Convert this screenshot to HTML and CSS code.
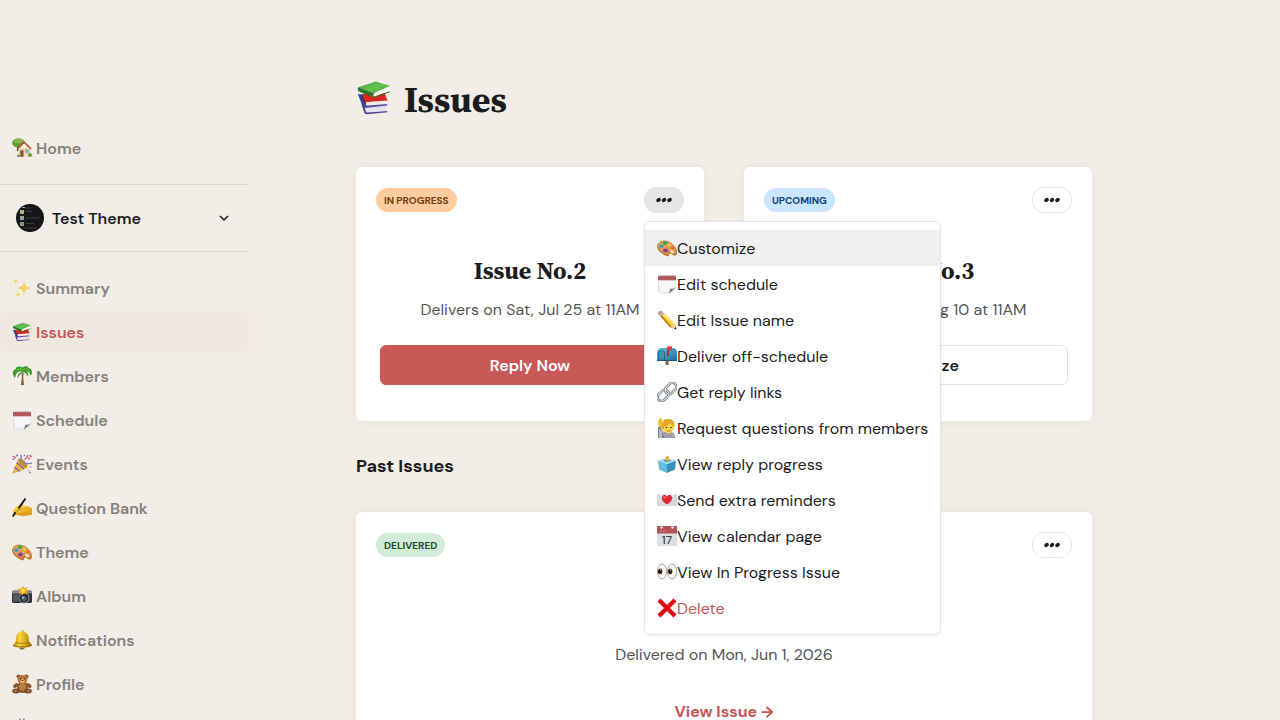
FILE: index.html
```html
<!DOCTYPE html>
<html lang="en">
<head>
<meta charset="utf-8">
<meta name="viewport" content="width=device-width, initial-scale=1">
<title>Issues</title>
<link rel="stylesheet" href="styles.css">
</head>
<body>
<svg class="sprite" aria-hidden="true">
  <defs>
    <linearGradient id="gold" x1="0" y1="0" x2="1" y2="1"><stop offset="0" stop-color="#ffe04f"/><stop offset="1" stop-color="#d99012"/></linearGradient>
    <linearGradient id="blue" x1="0" y1="0" x2="1" y2="1"><stop offset="0" stop-color="#63bfe2"/><stop offset="1" stop-color="#1c6f9d"/></linearGradient>
    <linearGradient id="leaf" x1="0" y1="0" x2="1" y2="1"><stop offset="0" stop-color="#3f9c3c"/><stop offset=".5" stop-color="#69c24f"/><stop offset="1" stop-color="#3f9f3f"/></linearGradient>
    <linearGradient id="bell" x1="0" y1="0" x2="1" y2="0"><stop offset="0" stop-color="#b58207"/><stop offset=".35" stop-color="#f8d93f"/><stop offset=".7" stop-color="#d2a413"/><stop offset="1" stop-color="#94690a"/></linearGradient>
  </defs>
  <symbol id="i-books" viewBox="0 0 20 20">
    <path fill="#4b4594" d="M3 13.500l1.600 4.600c.3.800.8 1 1.600.9l11.300-1.100-.5-.7-11 .5-1.200-3z"/>
    <path fill="#e4e3f0" d="M5.200 15.400l11.700-1.100.1 2.900-10.600.9c-.9 0-1.500-1.700-1.200-2.700z"/>
    <path fill="#5a51a6" d="M4.600 14l12.600-1 .2 1.200-12.200 1.400z"/>
    <path fill="#2b499f" d="M1 7.800l2.400 6.100c.3.800.8 1.100 1.600 1l1.200-.4L3.600 8z"/>
    <path fill="#d9281f" d="M3.400 7.800l12.400-1.200 1.700 5-12 .7z"/>
    <path fill="#f1ece7" d="M5.500 12.300l11.700-.9.300 1.900-11.300.9c-.9-.1-1.100-1.200-.7-1.900z"/>
    <path fill="#8e1920" d="M3.400 7.800l2.100 4.500v1.900l-2.300-4.400z"/>
    <path fill="url(#leaf)" d="M1.200 4L11 .8l7.900 2.400-9.200 4.200z"/>
    <path fill="#f7f7ef" d="M9.700 7.600l8.800-3.700-.3 2.400-8.400 3.100z"/>
    <path fill="#26732b" d="M1.200 4l8.500 3.400c-.7.800-.6 1.400.2 1.900l8.800-3.100v.6L9.900 9.900 2 6.500C1 6 .7 4.900 1.200 4z"/>
  </symbol>
  <symbol id="i-home" viewBox="0 0 20 20">
    <path fill="#5d3c24" d="M5 7h2v6H5z"/><ellipse cx="6.500" cy="5" rx="6.400" ry="4.600" fill="#5f9636"/><ellipse cx="6.500" cy="3" rx="4.500" ry="2.400" fill="#85b64b"/>
    <path fill="#e9d9ba" d="M6.200 10l6-5.500 6.500 6v8.300H6.200z"/><path fill="#fff2d8" d="M8 10l4-4 3.500 4z"/>
    <path fill="none" stroke="#b44531" stroke-width="1.300" d="M5.700 10.500l6.500-6.300 7 6.800"/>
    <path fill="#874e2d" d="M8.300 12.300h3.200v6.500H8.300z"/><path fill="#83a8b9" d="M13.300 11.500h3.400v3.300h-3.400z"/><circle cx="18" cy="17" r="2" fill="#69a43c"/><circle cx="6.500" cy="17.800" r="1.400" fill="#659a3c"/>
  </symbol>
  <symbol id="i-sparkles" viewBox="0 0 20 20"><g fill="#f8d35c"><path d="M12 2c.6 5.500 2 7 7 8-5 1-6.400 2.500-7 8-.6-5.500-2-7-7-8 5-1 6.400-2.500 7-8z"/><path d="M3.700 0c.2 2.300.9 3 3.200 3.300-2.300.3-3 1-3.200 3.300C3.500 4.300 2.800 3.600.5 3.300 2.800 3 3.500 2.300 3.700 0zM6 13.200c.3 2.300.9 2.900 3 3.300-2.100.4-2.700 1-3 3.300-.3-2.300-.9-2.900-3-3.300 2.100-.4 2.700-1 3-3.300z"/></g></symbol>
  <symbol id="i-palm" viewBox="0 0 20 20">
    <path fill="#8d5932" d="M9.600 6.500l2 .2c-.6 3.500-.5 7 .5 12.300H8.800C10 14 10.200 10 9.600 6.500z"/><path stroke="#5f3a20" stroke-width=".5" d="M9.800 10h1.500M9.800 12.500h1.600M9.500 15h2"/>
    <path fill="#3d952d" d="M10 6C6 4.500 4 7 3 12 0 8 0 4 4 3 3 1 8-1 10.300 1.700c2-2.200 6-1.700 6.200.3 3.500.3 4.500 4 2.200 8-.6-2.500-2-4.500-4-4.500 1.500 1.500 1.800 3.500 1.300 5.500-.9-2.500-2-4-4.500-5-1 .5-4 1.500-5.500 6.500C4.800 9 7 6.500 10 6z"/>
    <path fill="none" stroke="#76c53f" d="M10 4.500C7 2.500 4 4 2.500 6.500M10.500 4c3-2 6-1 7.500 2M9.500 3L7 1.800"/>
  </symbol>
  <symbol id="i-pad" viewBox="0 0 20 20">
    <path fill="#dedee0" d="M1 3h18v11l-5 5.500H3L1 17z"/><path fill="#f6f6f7" d="M1.500 6h17v7L13 18.500H3z"/><path fill="#b6575a" d="M1 2h18v4.300H1z"/><path fill="#d5d2d3" d="M1 1h18v1.200H1z"/><path stroke="#7d3b3f" stroke-width=".5" d="M4 1.500v1.800m3-1.800v1.800m3-1.800v1.800m3-1.800v1.800m3-1.800v1.800"/><path fill="#71767d" d="M19 13.500L12 19.500l1.500-5c1.500.5 3.500.2 5.500-1z"/>
  </symbol>
  <symbol id="i-party" viewBox="0 0 20 20">
    <path fill="#e7b546" d="M6 5l9.500 9L0 20z"/><path fill="none" stroke="#8663a3" stroke-width="1.400" d="M4.800 8.500l7 6.500M2.700 13l5 4.500"/><ellipse cx="11" cy="9" rx="2.400" ry="6" fill="#c28a34" transform="rotate(-45 11 9)"/>
    <path fill="none" stroke="#7b83c4" stroke-width="1.400" d="M10 8C7.500 5 11 4 8.500 1M12 10c2-2 4 1 8-1"/><path fill="none" stroke="#d35879" stroke-width="1.400" d="M13 6c0-3 3-2 3-5M1 2l3 2M18 1l1.500 2M18 4l-2 1"/><g fill="#7d75bd"><circle cx="1.500" cy="5" r="1"/><circle cx="5" cy="1.500" r="1"/><circle cx="12.500" cy="1.500" r=".8"/></g><g fill="#df9fb3"><circle cx="18.500" cy="13" r="1"/><circle cx="16.500" cy="16.500" r=".9"/></g><circle cx="18" cy="18.500" r="1" fill="#8f8cc9"/>
  </symbol>
  <symbol id="i-write" viewBox="0 0 20 20">
    <path fill="url(#gold)" d="M1.500 12c1.500-3 4.500-5.500 9-6 1.500 0 1.500 2-.5 3.300l3.500-1.300c2.500-.5 4 1.500 6.500 2v6.500c-2 1-4 .5-6.500 1.500-4 .5-6-.5-8.500-.7-4 0-4.500-3-3.500-5.300z"/><path fill="none" stroke="#b87711" stroke-width=".7" d="M4 13c3-.5 5-2 6-3M5 16c3 .3 5.500 0 8.500-1"/><path fill="none" stroke="#171717" stroke-width="1.900" d="M13.500.5L6.500 10.500M3.500 14.300L.8 18.500"/>
  </symbol>
  <symbol id="i-palette" viewBox="0 0 20 20">
    <path fill="#c07c2e" d="M.3 7C2 1.800 9 1 14 4.700c4.500 3.200 7 8.200 5.800 11.300-1 2.700-3.800 1.400-5.100.2-1.500-1.300-3-.8-2.500.6.500 1.600-1.700 2-4 .8C4 15.300-1.200 11 .3 7z"/><path fill="#dfa14c" d="M1.200 6.600C3 2.500 9 1.900 13.500 5.200c3.700 2.800 5.900 7.200 5.100 9.800-1 1-3-.7-4.500-1.700-2-1-3.800.4-3.200 2.200C8 17-.5 11 1.200 6.600z"/>
    <ellipse cx="4.300" cy="8.200" rx="2.100" ry="1.600" fill="#3296d5"/><ellipse cx="8" cy="5" rx="2.300" ry="1.700" fill="#3ba45a"/><ellipse cx="12.600" cy="6.800" rx="1.900" ry="1.400" fill="#f3c83d"/><ellipse cx="15.700" cy="10" rx="1.600" ry="1.300" fill="#e66936"/><ellipse cx="8.500" cy="12.500" rx="2.500" ry="2" fill="#8c38a7"/><ellipse cx="15" cy="13.800" rx="2.100" ry="1.300" fill="#f2ede7" transform="rotate(38 15 13.800)"/>
  </symbol>
  <symbol id="i-camera" viewBox="0 0 20 20">
    <path fill="#303439" d="M0 6.500q0-2 2-2h16q2 0 2 2v9q0 1.500-2 1.500H2Q0 17 0 15.500z"/><path fill="#848b90" d="M0 6.500q0-2 2-2h16q2 0 2 2v1H0z"/><path fill="#555b60" d="M1 8.500h5v7H1z"/><circle cx="12" cy="12" r="5.500" fill="#979da1"/><circle cx="12" cy="12" r="4.600" fill="#24272b"/><circle cx="12" cy="12.500" r="2.700" fill="#4d5c72"/><circle cx="11" cy="11.500" r="1" fill="#b2c6de"/>
    <path fill="#f5a720" d="M11 0l1.200 2L15 .8l-.5 2.700 2.500 1-2.500 1.300.6 2.500-3-1L10 9.500 9 7 6 7.400l1.500-2.500L5.600 2.700l3 .1z"/><circle cx="11" cy="4.800" r="2" fill="#ffe15b"/>
  </symbol>
  <symbol id="i-bell" viewBox="0 0 20 20"><ellipse cx="10" cy="17.700" rx="2.700" ry="1.900" fill="#8f650c"/><path fill="url(#bell)" d="M8.500 1.800c0-2.300 3.500-2.300 3.500 0 4.500 1.500 4.500 5 5 9 .5 2.200 3 3.200 3 4.700-3 2.700-16 3-19 .5-.3-1.500 2.500-3 3-5.500C4.500 6 4 3.300 8.500 1.800z"/><path fill="none" stroke="#8d6409" stroke-width=".8" d="M1.500 15.500c4 2 13.500 1.500 18 0M4 12.500c4 1.200 8.500 1.200 13 0"/></symbol>
  <symbol id="i-bear" viewBox="0 0 20 20"><g fill="#8d542a"><circle cx="6.500" cy="2.500" r="2"/><circle cx="14.500" cy="2.500" r="2"/><ellipse cx="10.500" cy="13.500" rx="5.500" ry="5.500"/><ellipse cx="3.800" cy="11.500" rx="3" ry="1.800" transform="rotate(-35 3.800 11.500)"/><ellipse cx="16.800" cy="11.500" rx="3" ry="1.800" transform="rotate(35 16.800 11.500)"/></g><ellipse cx="10.500" cy="5.500" rx="5" ry="4.500" fill="#b9783b"/><ellipse cx="10.500" cy="13" rx="3.500" ry="3.800" fill="#b97c40"/><ellipse cx="4" cy="17" rx="3.800" ry="2.500" fill="#7c4725"/><ellipse cx="16" cy="17" rx="3.800" ry="2.500" fill="#7c4725"/><circle cx="3.500" cy="17" r="1.400" fill="#b57946"/><circle cx="16.500" cy="17" r="1.400" fill="#b57946"/><ellipse cx="10.500" cy="7" rx="2.200" ry="1.700" fill="#edbf7b"/><g fill="#27170e"><circle cx="8.500" cy="4.700" r=".6"/><circle cx="12.500" cy="4.700" r=".6"/><ellipse cx="10.500" cy="6.500" rx=".9" ry=".6"/></g></symbol>
  <symbol id="i-gear" viewBox="0 0 20 20"><g stroke="#8b9095" fill="none"><circle cx="10" cy="10" r="7" stroke-width="2"/><circle cx="10" cy="10" r="2"/><path stroke-width="1.600" d="M8 .5L8.500 4M12 .5L11.500 4M3.500 2.500L5 4.500M16.500 2.500L15 4.500M10 12v5M12 10h5M3 10h5M1 8h2M17 8h2M1 12h2M17 12h2M8 16v3.500M12 16v3.500"/></g></symbol>
  <symbol id="i-pencil" viewBox="0 0 20 20"><path fill="#f7c728" d="M3.500 6.500L7 3l11 11.500.3 1.500-3 2.500-1.800-.7z"/><path fill="#ffe36a" d="M5.500 4.500L7 3l11 11.500-1.200 1z"/><path fill="#bd7c16" d="M3.500 6.500l1.200-1.200L15 17.500l-1.500.3z"/><path fill="#e3817f" d="M.8 3.700C.5 2 2.600.2 4.500.8L5.700 2 2.200 5.300z"/><path fill="#a5adb1" d="M2.200 5.300L5.700 2 7 3.200 3.600 6.700z"/><path fill="#efcf98" d="M13.300 17.500l4.700-3.700 1.300 5.600z"/><path fill="#252525" d="M17 18.700l2-1.600.4 2.400z"/></symbol>
  <symbol id="i-mailbox" viewBox="0 0 20 20"><path fill="#91663a" d="M8.500 12h3.200v7H8.500z"/><path fill="url(#blue)" d="M4 2h12c2.500 0 4 2 4 5v7.500H0V7c0-3 1.500-5 4-5z"/><path fill="#246a8f" d="M1 14.500V7c0-4 7-4 7 0v7.500z"/><path fill="#3d91b8" d="M2 13.500V7c0-2.500 5-2.500 5 0v6.500z"/><path fill="#be2525" d="M10 1h1.800v9H10z"/><path fill="#f03b34" d="M10 .5l5-.2v4h-5z"/><path fill="#1e5879" d="M0 14h20v1H0z"/></symbol>
  <symbol id="i-link" viewBox="0 0 20 20"><g fill="none"><g stroke="#6b737a" stroke-width="2.600"><rect x="7.500" y="2.500" width="12.500" height="8" rx="4" transform="rotate(-45 13.700 6.500)"/><rect x="0" y="9.500" width="12.500" height="8" rx="4" transform="rotate(-45 6.200 13.500)"/></g><g stroke="#d5dbdf" stroke-width="1.200"><rect x="7.500" y="2.500" width="12.500" height="8" rx="4" transform="rotate(-45 13.700 6.500)"/><rect x="0" y="9.500" width="12.500" height="8" rx="4" transform="rotate(-45 6.200 13.500)"/></g></g></symbol>
  <symbol id="i-person" viewBox="0 0 20 20"><path fill="#9da2a8" d="M1 20c0-5 0-7 3-7.500L8 14h6c3 0 4 3 4.500 6z"/><path fill="#f3bb2c" d="M2 11L1.200 4l.8-3.500 1 .3L3.800 0l1 .7.5 4 .5 8.500-3 1z"/><circle cx="11" cy="7.500" r="6.300" fill="#d48f1d"/><ellipse cx="11.500" cy="9.500" rx="5" ry="6" fill="#ffd24b"/><path fill="#e6a82a" d="M5 9C4.500 1.500 8.500.5 12 1c5 .5 6 4 5.200 8C15.500 8 14 6.500 13 4.500c-1 3-5 4-8 4.500z"/><circle cx="9.500" cy="9.500" r=".8" fill="#493618"/><circle cx="14" cy="9.500" r=".8" fill="#493618"/><path fill="none" stroke="#9d5d24" stroke-width=".8" d="M10 12.500c1 1 2.500 1 3.500 0"/><path fill="#777f87" d="M1 20V9h2.500l1 4 3 7z"/><path fill="#b4b9be" d="M2 20V10l3 4v6z"/></symbol>
  <symbol id="i-ballot" viewBox="0 0 20 20"><path fill="#64bddd" d="M1 6.500l9 3.500v9L2 15.500z"/><path fill="#3a91bb" d="M10 10l9-3.500-1 9-8 3.500z"/><path fill="#9edcef" d="M1 6.500L10 4l9 2.500-9 3.500z"/><path fill="#256988" d="M6.500 6.500L10 5.300l3.500 1.200-3.500 1.400z"/><path fill="#eda93a" d="M8.500 3.500l2-2 1.700 1.500v3.500L10 7.400l-1.500-.8z"/></symbol>
  <symbol id="i-letter" viewBox="0 0 20 20"><path fill="#d7dbdd" d="M0 4h20v12H0z"/><path fill="#eceeef" d="M0 4l10 8 10-8z"/><path fill="none" stroke="#b6bbbf" stroke-width=".5" d="M0 4l10 8 10-8M0 16l7-6.500M20 16l-7-6.500"/><path fill="#dd2933" d="M10 14.500C6 12 4.300 9.500 5 7c.8-2.500 4-2.500 5-.3 1-2.200 4.200-2.200 5 .3.700 2.500-1 5-5 7.500z"/><ellipse cx="7.500" cy="7.500" rx="1.400" ry="1" fill="#f8767a"/></symbol>
  <symbol id="i-eyes" viewBox="0 0 20 20"><g fill="#fff" stroke="#9b9691" stroke-width=".9"><ellipse cx="5" cy="9.500" rx="4.500" ry="7.500"/><ellipse cx="15" cy="9.500" rx="4.500" ry="7.500"/></g><ellipse cx="3.200" cy="9.500" rx="2.300" ry="3" fill="#6a4525"/><ellipse cx="13.200" cy="9.500" rx="2.300" ry="3" fill="#6a4525"/><circle cx="3" cy="9.500" r="1.700"/><circle cx="13" cy="9.500" r="1.700"/><g fill="#fff"><circle cx="3.700" cy="8.500" r=".5"/><circle cx="13.700" cy="8.500" r=".5"/></g></symbol>
  <symbol id="i-cross" viewBox="0 0 20 20"><path stroke="#e30b12" stroke-width="4.300" d="M2 2l16 16M18 2L2 18"/></symbol>
  <symbol id="i-dots" viewBox="0 0 16 6"><g fill="#1c1c1c"><ellipse cx="2.500" cy="3" rx="2.400" ry="1.900" transform="rotate(-35 2.500 3)"/><ellipse cx="8" cy="3" rx="2.400" ry="1.900" transform="rotate(-35 8 3)"/><ellipse cx="13.500" cy="3" rx="2.400" ry="1.900" transform="rotate(-35 13.500 3)"/></g></symbol>
</svg>
<div class="layout">
  <nav class="sidebar" aria-label="Main">
    <a class="nav-item" href="#"><svg class="icon"><use href="#i-home"/></svg>Home</a>
    <button class="switcher" type="button">
      <svg class="avatar" viewBox="0 0 28 28" aria-hidden="true"><circle cx="14" cy="14" r="14" fill="#151617"/><g fill="#b5aa7c"><path d="M4 6h4v4H4z"/><path fill="#93a18e" d="M4 12h4v4H4z"/><path fill="#77a06e" d="M4 18h4v4H4z"/><path fill="#b8a35e" d="M6 3h3v1H6z"/></g><path stroke="#43484a" stroke-width=".8" d="M9.500 4H15M9.500 7.500H16M9.500 14H24M9.500 19.500H18M8 24h13"/></svg>
      <span class="switcher-name">Test Theme</span>
      <svg class="chevron" viewBox="0 0 12 12" aria-hidden="true"><path d="M2 4l4 4 4-4" fill="none" stroke="#1c1c1c" stroke-width="1.500"/></svg>
    </button>
    <div class="nav-list">
      <a class="nav-item" href="#"><svg class="icon"><use href="#i-sparkles"/></svg>Summary</a>
      <a class="nav-item active" href="#" aria-current="page"><svg class="icon"><use href="#i-books"/></svg>Issues</a>
      <a class="nav-item" href="#"><svg class="icon"><use href="#i-palm"/></svg>Members</a>
      <a class="nav-item" href="#"><svg class="icon"><use href="#i-pad"/></svg>Schedule</a>
      <a class="nav-item" href="#"><svg class="icon"><use href="#i-party"/></svg>Events</a>
      <a class="nav-item" href="#"><svg class="icon"><use href="#i-write"/></svg>Question Bank</a>
      <a class="nav-item" href="#"><svg class="icon"><use href="#i-palette"/></svg>Theme</a>
      <a class="nav-item" href="#"><svg class="icon"><use href="#i-camera"/></svg>Album</a>
      <a class="nav-item" href="#"><svg class="icon"><use href="#i-bell"/></svg>Notifications</a>
      <a class="nav-item" href="#"><svg class="icon"><use href="#i-bear"/></svg>Profile</a>
      <a class="nav-item" href="#" aria-label="Settings"><svg class="icon"><use href="#i-gear"/></svg></a>
    </div>
  </nav>
  <main class="content">
    <h1 class="page-title"><svg class="title-icon"><use href="#i-books"/></svg>Issues</h1>
    <div class="cards">
      <article class="card">
        <header class="card-head">
          <span class="badge progress">IN PROGRESS</span>
          <div class="menu-anchor">
            <button class="more open" type="button" aria-label="More options" aria-expanded="true"><svg class="dots"><use href="#i-dots"/></svg></button>
            <div class="menu" role="menu">
              <button class="menu-item current" role="menuitem"><svg class="icon"><use href="#i-palette"/></svg>Customize</button>
              <button class="menu-item" role="menuitem"><svg class="icon"><use href="#i-pad"/></svg>Edit schedule</button>
              <button class="menu-item" role="menuitem"><svg class="icon"><use href="#i-pencil"/></svg>Edit Issue name</button>
              <button class="menu-item" role="menuitem"><svg class="icon"><use href="#i-mailbox"/></svg>Deliver off-schedule</button>
              <button class="menu-item" role="menuitem"><svg class="icon"><use href="#i-link"/></svg>Get reply links</button>
              <button class="menu-item" role="menuitem"><svg class="icon"><use href="#i-person"/></svg>Request questions from members</button>
              <button class="menu-item" role="menuitem"><svg class="icon"><use href="#i-ballot"/></svg>View reply progress</button>
              <button class="menu-item" role="menuitem"><svg class="icon"><use href="#i-letter"/></svg>Send extra reminders</button>
              <button class="menu-item" role="menuitem"><svg class="icon" viewBox="0 0 20 20" aria-hidden="true"><path fill="#dddfe1" d="M0 1h20v19H0z"/><path fill="#b15254" d="M0 0h20v7.500H0z"/><g fill="#eee7e7"><circle cx="4.500" cy="1.500" r="1.200"/><circle cx="15.500" cy="1.500" r="1.200"/></g><path stroke="#d89596" d="M3 5.500l2-1m1 1l2-1"/><text x="10" y="18" text-anchor="middle" font-size="12" font-weight="500" fill="#3f4245">17</text></svg>View calendar page</button>
              <button class="menu-item" role="menuitem"><svg class="icon"><use href="#i-eyes"/></svg>View In Progress Issue</button>
              <button class="menu-item danger" role="menuitem"><svg class="icon"><use href="#i-cross"/></svg>Delete</button>
            </div>
          </div>
        </header>
        <h2 class="card-title">Issue No.2</h2>
        <p class="card-date">Delivers on Sat, Jul 25 at 11AM</p>
        <button class="action primary" type="button">Reply Now</button>
      </article>
      <article class="card">
        <header class="card-head">
          <span class="badge upcoming">UPCOMING</span>
          <button class="more" type="button" aria-label="More options"><svg class="dots"><use href="#i-dots"/></svg></button>
        </header>
        <h2 class="card-title">Issue No.3</h2>
        <p class="card-date">Starts on Mon, Aug 10 at 11AM</p>
        <button class="action" type="button">Customize</button>
      </article>
    </div>
    <h2 class="section-title">Past Issues</h2>
    <article class="card">
      <header class="card-head">
        <span class="badge delivered">DELIVERED</span>
        <button class="more" type="button" aria-label="More options"><svg class="dots"><use href="#i-dots"/></svg></button>
      </header>
      <h2 class="card-title">Issue No.1</h2>
      <p class="card-date">Delivered on Mon, Jun 1, 2026</p>
      <a class="view-link" href="#">View Issue →</a>
    </article>
  </main>
</div>
</body>
</html>
```
FILE: styles.css
```css
* { box-sizing: border-box; }
body {
  margin: 0;
  height: 100vh;
  overflow: hidden;
  background: #f2ede7;
  color: #1c1c1c;
  font: 400 16px/24px "DM Sans", Inter, sans-serif;
}
button { font: inherit; color: inherit; border: 0; background: none; padding: 0; cursor: pointer; }
a { text-decoration: none; }
h1, h2, p { margin: 0; }
.sprite { position: absolute; width: 0; height: 0; }
.icon { width: 20px; height: 20px; flex: none; margin-bottom: 2px; }

.layout { display: grid; grid-template-columns: 248px 1fr; padding-right: 80px; }
.sidebar { padding-top: 128px; }
.nav-item {
  display: flex;
  align-items: center;
  gap: 4px;
  height: 40px;
  padding: 2px 12px 0;
  border-radius: 6px;
  color: #84807c;
  font-weight: 600;
}
.nav-item.active { background: #efe8df; color: #c95457; }
.nav-list { display: grid; gap: 4px; }
.switcher {
  display: flex;
  align-items: center;
  gap: 8px;
  width: 100%;
  height: 68px;
  margin: 16px 0;
  padding: 0 18px 0 16px;
  border-top: 1px solid #ddd8d3;
  border-bottom: 1px solid #ddd8d3;
  font-weight: 600;
  text-align: left;
}
.avatar { width: 28px; height: 28px; }
.switcher-name { flex: 1; padding-top: 2px; }
.chevron { width: 12px; height: 12px; }

.content { width: 100%; max-width: 736px; margin: 0 auto; padding-top: 76px; }
.page-title {
  display: flex;
  align-items: center;
  gap: 12px;
  margin-bottom: 43px;
  font: 700 36px/48px "Source Serif 4", "Liberation Serif", serif;
}
.title-icon { width: 36px; height: 36px; margin-bottom: 4px; }
.cards { display: grid; grid-template-columns: 1fr 1fr; gap: 40px; }
.card {
  display: flex;
  flex-direction: column;
  padding: 20px 24px 36px;
  border-radius: 6px;
  background: #fff;
  box-shadow: 0 0 10px #0000000f;
}
.card-head { display: flex; justify-content: space-between; align-items: center; margin: 0 -4px 40px; }
.badge { padding: 1px 8px 0; border-radius: 12px; font-size: 10px; font-weight: 700; line-height: 23px; }
.progress { background: #ffcc9f; color: #713b0b; }
.upcoming { background: #cae5ff; color: #0b3f7c; }
.delivered { background: #d2ecd9; color: #174f29; }
.more {
  display: grid;
  place-items: center;
  width: 40px;
  height: 26px;
  border: 1px solid #e5e5e5;
  border-radius: 12px;
}
.more.open { background: #e6e6e6; }
.dots { width: 16px; height: 6px; }
.card-title { text-align: center; font: 700 24px/36px "Source Serif 4", "Liberation Serif", serif; }
.card-date { margin: 8px 0 22px; color: #555; line-height: 26px; text-align: center; }
.action { height: 40px; padding-top: 2px; border: 1px solid #e2e2e2; border-radius: 6px; font-weight: 600; }
.primary { border-color: #c95858; background: #c95858; color: #fff; }
.section-title { margin: 32px 0; font-size: 18px; font-weight: 700; line-height: 27px; }
.view-link { align-self: center; padding-top: 2px; color: #c95457; font-weight: 700; line-height: 40px; }

.menu-anchor { position: relative; }
.menu {
  position: absolute;
  z-index: 2;
  top: calc(100% + 8px);
  left: 0;
  width: max-content;
  padding: 8px 0;
  border: 1px solid #e5e5e5;
  border-radius: 6px;
  background: #fff;
  box-shadow: 0 1px 3px #00000010;
}
.menu-item { display: flex; align-items: center; width: 100%; height: 36px; padding: 2px 12px 0; text-align: left; }
.menu-item.current { background: #f0f0f0; }
.danger { color: #c95457; }
```
